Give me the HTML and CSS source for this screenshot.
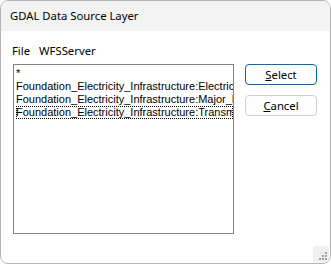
FILE: index.html
```html
<!DOCTYPE html>
<html>
<head>
<meta charset="utf-8">
<link rel="stylesheet" href="styles.css">
</head>
<body>
<div class="window">
  <div class="titlebar">GDAL Data Source Layer</div>
  <div class="client">
    <div class="menubar">
      <span class="menu-item">File</span>
      <span class="menu-item">WFSServer</span>
    </div>
    <div class="content">
      <div class="listbox">
        <div class="row">*</div>
        <div class="row">Foundation_Electricity_Infrastructure:Electric_Power_Transmission_Lines</div>
        <div class="row">Foundation_Electricity_Infrastructure:Major_Power_Stations</div>
        <div class="row focused">Foundation_Electricity_Infrastructure:Transmission_Substations</div>
      </div>
      <div class="buttons">
        <button class="btn default"><u>S</u>elect</button>
        <button class="btn"><u>C</u>ancel</button>
      </div>
    </div>
    <div class="grip">
      <svg width="16" height="16" viewBox="0 0 16 16">
        <rect x="12" y="6" width="2" height="2" fill="#a0a0a0"/>
        <rect x="9" y="9" width="2" height="2" fill="#a0a0a0"/>
        <rect x="12" y="9" width="2" height="2" fill="#a0a0a0"/>
        <rect x="6" y="12" width="2" height="2" fill="#a0a0a0"/>
        <rect x="9" y="12" width="2" height="2" fill="#a0a0a0"/>
        <rect x="12" y="12" width="2" height="2" fill="#a0a0a0"/>
      </svg>
    </div>
  </div>
</div>
</body>
</html>
```
FILE: styles.css
```css
html, body {
  margin: 0;
  padding: 0;
  background: #ffffff;
}
.window {
  width: 331px;
  height: 264px;
  box-sizing: border-box;
  border: 1px solid #b4b4b4;
  border-radius: 8px;
  overflow: hidden;
  background: #ffffff;
  display: flex;
  flex-direction: column;
  font-family: "Noto Sans", "Open Sans", sans-serif;
  font-size: 11.3px;
  color: #000;
}
.titlebar {
  height: 30px;
  background: #f3f3f3;
  padding-left: 9px;
  line-height: 30px;
  font-size: 11.3px;
  flex: none;
}
.client {
  flex: 1;
  position: relative;
  padding: 0 12px 0 11px;
  display: flex;
  flex-direction: column;
}
.menubar {
  display: flex;
  gap: 9px;
  padding-top: 10px;
  height: 23px;
  line-height: 19px;
}
.content {
  display: flex;
  gap: 11px;
  padding-left: 1px;
}
.listbox {
  width: 221px;
  height: 170px;
  box-sizing: border-box;
  border: 1px solid #828282;
  padding: 2px 0 0 2px;
  overflow: hidden;
  font-family: "Liberation Sans", Arial, sans-serif;
  font-size: 11px;
  white-space: nowrap;
}
.row {
  height: 13px;
  line-height: 13px;
  box-sizing: border-box;
}
.row.focused {
  outline: 1px dotted #000;
  outline-offset: -1px;
}
.buttons {
  display: flex;
  flex-direction: column;
  gap: 10px;
}
.btn {
  width: 72px;
  height: 21px;
  box-sizing: border-box;
  border: 1px solid #d0d0d0;
  border-radius: 4px;
  background: #fdfdfd;
  font-family: "Noto Sans", "Open Sans", sans-serif;
  font-size: 11.3px;
  color: #000;
  padding: 0;
  line-height: 18px;
}
.btn.default {
  border: 1px solid #0067c0;
}
.grip {
  position: absolute;
  right: 1px;
  bottom: 1px;
  width: 16px;
  height: 16px;
  background: #f0f0f0;
}
.grip svg {
  display: block;
}
```
